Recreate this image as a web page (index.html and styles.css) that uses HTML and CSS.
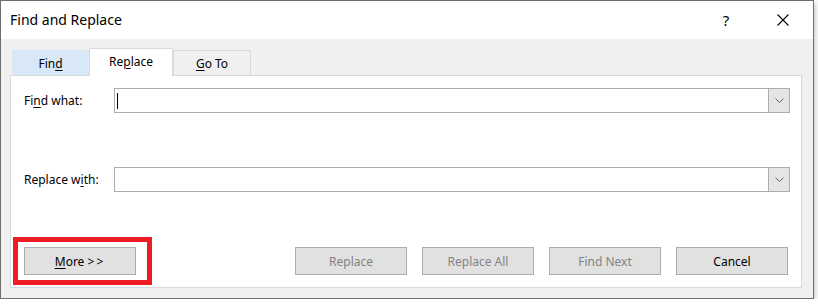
FILE: index.html
```html
<!DOCTYPE html>
<html lang="en">
<head>
    <meta charset="UTF-8">
    <title>Find and Replace</title>
    <link rel="stylesheet" href="styles.css">
</head>
<body>
    <div class="dialog">
        <div class="titlebar">
            <span class="title">Find and Replace</span>
            <span class="help">?</span>
            <span class="close">
                <svg width="12" height="12" viewBox="0 0 12 12">
                    <path d="M0.5 0.5 L11.5 11.5 M11.5 0.5 L0.5 11.5" stroke="#000" stroke-width="1.1" fill="none"/>
                </svg>
            </span>
        </div>
        <div class="dialog-body">
            <div class="tabs">
                <div class="tab tab-hover">Fin<u>d</u></div>
                <div class="tab tab-active">Re<u>p</u>lace</div>
                <div class="tab"><u>G</u>o To</div>
            </div>
            <div class="panel">
                <div class="field-row">
                    <label class="field-label">Fi<u>n</u>d what:</label>
                    <div class="combo">
                        <div class="combo-text"><span class="caret"></span></div>
                        <div class="combo-arrow">
                            <svg width="9" height="5" viewBox="0 0 9 5">
                                <polyline points="0.5,0.5 4.5,4.5 8.5,0.5" stroke="#606060" stroke-width="1" fill="none"/>
                            </svg>
                        </div>
                    </div>
                </div>
                <div class="field-row replace-row">
                    <label class="field-label">Replace w<u>i</u>th:</label>
                    <div class="combo">
                        <div class="combo-text"></div>
                        <div class="combo-arrow">
                            <svg width="9" height="5" viewBox="0 0 9 5">
                                <polyline points="0.5,0.5 4.5,4.5 8.5,0.5" stroke="#606060" stroke-width="1" fill="none"/>
                            </svg>
                        </div>
                    </div>
                </div>
                <div class="footer">
                    <div class="highlight">
                        <button class="button"><u>M</u>ore <span class="arrows">&gt;&gt;</span></button>
                    </div>
                    <div class="button-group">
                        <button class="button disabled">Replace</button>
                        <button class="button disabled">Replace All</button>
                        <button class="button disabled">Find Next</button>
                        <button class="button">Cancel</button>
                    </div>
                </div>
            </div>
        </div>
    </div>
</body>
</html>
```

FILE: styles.css
```css
body {
    margin: 0;
    background-color: #ffffff;
    font-family: "Noto Sans", sans-serif;
    font-size: 12px;
    color: #000;
}
u {
    text-decoration-thickness: 1px;
    text-underline-offset: 2px;
}
.dialog {
    width: 814px;
    height: 299px;
    box-sizing: border-box;
    border: 1px solid #6e6e6e;
    background-color: #f0f0f0;
    box-shadow: 1px 3px 6px rgba(0,0,0,0.25);
    display: flex;
    flex-direction: column;
}
.titlebar {
    height: 38px;
    background: #ffffff;
    display: flex;
    align-items: center;
    padding: 0 14px 0 9px;
}
.title {
    font-size: 14px;
    flex: 1;
    padding-bottom: 1px;
}
.help {
    width: 34px;
    text-align: center;
    font-size: 15px;
}
.close {
    width: 32px;
    margin-left: 24px;
    display: flex;
    justify-content: center;
}
.dialog-body {
    flex: 1;
    padding: 9px 11px 0 9px;
}
.tabs {
    display: flex;
    align-items: flex-end;
    margin-left: 2px;
}
.tab {
    height: 25px;
    box-sizing: border-box;
    width: 78px;
    display: flex;
    align-items: center;
    justify-content: center;
    border: 1px solid #d9d9d9;
    border-bottom: none;
    background: #f0f0f0;
}
.tab-hover {
    width: 77px;
    background: #d9e8f7;
    border-color: #d9e8f7;
}
.tab-active {
    width: 84px;
    height: 28px;
    margin-bottom: -1px;
    background: #ffffff;
    position: relative;
    z-index: 1;
    padding-bottom: 2px;
}
.panel {
    height: 213px;
    box-sizing: border-box;
    background: #ffffff;
    border: 1px solid #d9d9d9;
    padding: 12px 11px 0 13px;
}
.field-row {
    display: flex;
    align-items: center;
}
.replace-row {
    margin-top: 54px;
}
.field-label {
    width: 90px;
}
.combo {
    flex: 1;
    height: 25px;
    box-sizing: border-box;
    border: 1px solid #adadad;
    display: flex;
}
.combo-text {
    flex: 1;
    display: flex;
    align-items: center;
    padding-left: 2px;
}
.caret {
    width: 1px;
    height: 16px;
    background: #000;
}
.combo-arrow {
    width: 20px;
    background: #e5e5e5;
    border-left: 1px solid #adadad;
    display: flex;
    align-items: center;
    justify-content: center;
}
.footer {
    display: flex;
    align-items: center;
    margin-top: 45px;
    margin-left: -11px;
}
.highlight {
    border: 5px solid #ed1c24;
    padding: 5px 11px 5px 6px;
    display: flex;
}
.button-group {
    margin-left: auto;
    display: flex;
    gap: 15px;
    margin-right: 2px;
}
.button {
    width: 112px;
    height: 28px;
    box-sizing: border-box;
    border: 1px solid #adadad;
    background: #e1e1e1;
    font-family: "Noto Sans", sans-serif;
    font-size: 12px;
    color: #000;
    padding: 0;
}
.arrows {
    letter-spacing: 2px;
}
.disabled {
    color: #838383;
}
```
